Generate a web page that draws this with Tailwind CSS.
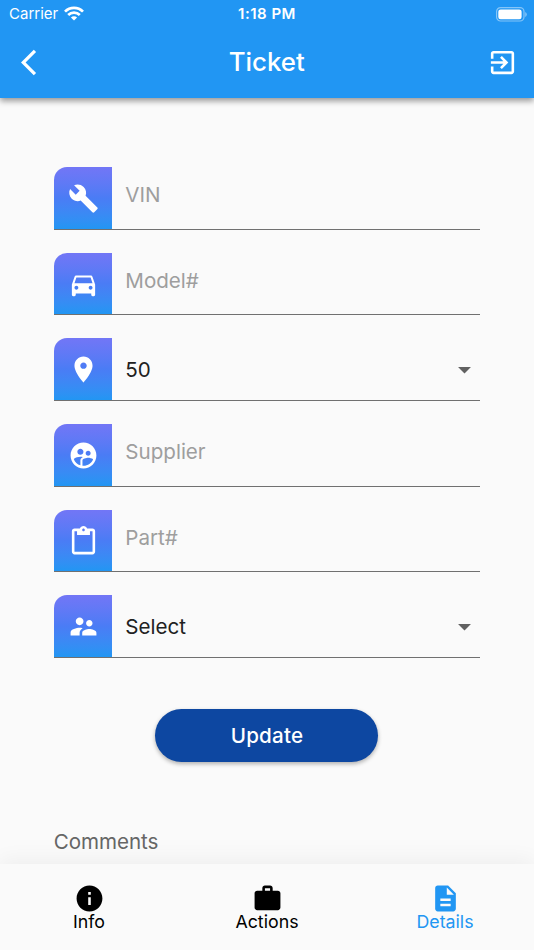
<!DOCTYPE html>
<html lang="en">
<head>
<meta charset="utf-8">
<title>Ticket</title>
<script src="https://cdn.jsdelivr.net/npm/@tailwindcss/browser@4"></script>
</head>
<body class="w-[534px] h-[950px] overflow-hidden bg-[#fafafa] font-['Inter',sans-serif] flex flex-col text-[20.6px] text-[#212121]">
  <header class="relative z-10 h-[98px] shrink-0 bg-[#2196f3] text-white shadow-[0_3px_6px_rgba(0,0,0,0.4)]">
    <div class="h-[27px] grid grid-cols-3 items-center px-[9px] text-[15px]">
      <div class="flex items-center gap-[6px]">
        <span class="leading-[28px]">Carrier</span>
        <svg class="w-[20px] h-[15px] -mt-[1px]" viewBox="0 0 20 15" fill="none" stroke="#fff" stroke-width="2.7"><path d="M1 5.6a12.7 12.7 0 0 1 18 0"/><path d="M4.2 9a8.2 8.2 0 0 1 11.6 0"/><path d="M10 14.6 6.9 11.5a4.4 4.4 0 0 1 6.2 0z" fill="#fff" stroke="none"/></svg>
      </div>
      <span class="text-center font-semibold leading-[28px] tracking-[0.5px]">1:18 PM</span>
      <svg class="w-[31px] h-[15px] justify-self-end -mr-[2px]" viewBox="0 0 31 15"><rect x="0.6" y="0.6" width="27.4" height="13.4" rx="4" fill="none" stroke="#fff" stroke-opacity=".45" stroke-width="1.2"/><rect x="2.3" y="2.4" width="23.3" height="9.8" rx="2.3" fill="#fff"/><path d="M29.3 5v5q1.4-.8 1.4-2.5T29.3 5z" fill="#fff" fill-opacity=".5"/></svg>
    </div>
    <div class="h-[71px] grid grid-cols-[1fr_auto_1fr] items-center pl-[20.5px] pr-[16px]">
      <svg class="size-[31px]" viewBox="0 0 24 24" fill="#fff"><path d="M11.67 3.87L9.9 2.1 0 12l9.9 9.9 1.77-1.77L3.54 12z"/></svg>
      <h1 class="text-[25.8px] font-medium -ml-[5px]">Ticket</h1>
      <svg class="size-[31px] justify-self-end" viewBox="0 0 24 24" fill="#fff"><path d="M10.09 15.59L11.5 17l5-5-5-5-1.41 1.41L12.67 11H3v2h9.67l-2.58 2.59zM19 3H5c-1.11 0-2 .9-2 2v4h2V5h14v14H5v-4H3v4c0 1.1.89 2 2 2h14c1.1 0 2-.9 2-2V5c0-1.1-.9-2-2-2z"/></svg>
    </div>
  </header>

  <main class="flex-1 px-[53.7px] pt-[69px]">
    <form class="flex flex-col gap-[23px]">
      <div class="h-[62.7px] flex border-b border-[#707070]">
        <span class="w-[58.6px] shrink-0 rounded-tl-[13px] bg-linear-to-b from-[#7276f6] via-[#4a7cf5] to-[#2196f3] flex items-center justify-center pt-[1px] pl-[1px]"><svg class="size-[31px]" viewBox="0 0 24 24" fill="#fff"><path d="M22.7 19l-9.1-9.1c.9-2.3.4-5-1.5-6.9-2-2-5-2.4-7.4-1.3L9 6 6 9 1.6 4.7C.4 7.1.9 10.1 2.9 12.1c1.9 1.9 4.6 2.4 6.9 1.5l9.1 9.1c.4.4 1 .4 1.4 0l2.3-2.3c.5-.4.5-1.1.1-1.4z"/></svg></span>
        <span class="pl-[13px] leading-[56px] text-[#9e9e9e]">VIN</span>
      </div>
      <div class="h-[62.7px] flex border-b border-[#707070]">
        <span class="w-[58.6px] shrink-0 rounded-tl-[13px] bg-linear-to-b from-[#7276f6] via-[#4a7cf5] to-[#2196f3] flex items-center justify-center pt-[1px] pl-[1px]"><svg class="size-[31px]" viewBox="0 0 24 24" fill="#fff"><path d="M18.92 6.01C18.72 5.42 18.16 5 17.5 5h-11c-.66 0-1.21.42-1.42 1.01L3 12v8c0 .55.45 1 1 1h1c.55 0 1-.45 1-1v-1h12v1c0 .55.45 1 1 1h1c.55 0 1-.45 1-1v-8l-2.08-5.99zM6.5 16c-.83 0-1.5-.67-1.5-1.5S5.67 13 6.5 13s1.5.67 1.5 1.5S7.33 16 6.5 16zm11 0c-.83 0-1.5-.67-1.5-1.5s.67-1.5 1.5-1.5 1.5.67 1.5 1.5-.67 1.5-1.5 1.5zM5 11l1.5-4.5h11L19 11H5z"/></svg></span>
        <span class="pl-[13px] leading-[56px] text-[#9e9e9e]">Model#</span>
      </div>
      <div class="h-[62.7px] flex border-b border-[#707070]">
        <span class="w-[58.6px] shrink-0 rounded-tl-[13px] bg-linear-to-b from-[#7276f6] via-[#4a7cf5] to-[#2196f3] flex items-center justify-center pl-[1px]"><svg class="size-[31px]" viewBox="0 0 24 24" fill="#fff"><path d="M12 2C8.13 2 5 5.13 5 9c0 5.25 7 13 7 13s7-7.75 7-13c0-3.87-3.13-7-7-7zm0 9.5c-1.38 0-2.5-1.12-2.5-2.5s1.12-2.5 2.5-2.5 2.5 1.12 2.5 2.5-1.12 2.5-2.5 2.5z"/></svg></span>
        <span class="pl-[13px] leading-[63px] flex-1">50</span>
        <svg class="size-[31px] self-center" viewBox="0 0 24 24" fill="#616161"><path d="M7 10l5 5 5-5z"/></svg>
      </div>
      <div class="h-[62.7px] flex border-b border-[#707070]">
        <span class="w-[58.6px] shrink-0 rounded-tl-[13px] bg-linear-to-b from-[#7276f6] via-[#4a7cf5] to-[#2196f3] flex items-center justify-center pt-[1px] pl-[1px]"><svg class="size-[31px]" viewBox="0 0 24 24" fill="#fff"><path d="M11.99 2c-5.52 0-10 4.48-10 10s4.48 10 10 10 10-4.48 10-10-4.48-10-10-10zm3.61 6.34c1.07 0 1.93.86 1.93 1.93 0 1.07-.86 1.93-1.93 1.93-1.07 0-1.93-.86-1.93-1.93-.01-1.07.86-1.93 1.93-1.93zm-6-1.58c1.3 0 2.36 1.06 2.36 2.36 0 1.3-1.06 2.36-2.36 2.36s-2.36-1.06-2.36-2.36c0-1.31 1.05-2.36 2.36-2.36zm0 9.13v3.75c-2.4-.75-4.3-2.6-5.14-4.96 1.05-1.12 3.67-1.69 5.14-1.69.53 0 1.2.08 1.9.22-1.64.87-1.9 2.02-1.9 2.68zM11.99 20c-.27 0-.53-.01-.79-.04v-4.07c0-1.42 2.94-2.13 4.4-2.13 1.07 0 2.92.39 3.84 1.15-1.17 2.97-4.06 5.09-7.45 5.09z"/></svg></span>
        <span class="pl-[13px] leading-[56px] text-[#9e9e9e]">Supplier</span>
      </div>
      <div class="h-[62.7px] flex border-b border-[#707070]">
        <span class="w-[58.6px] shrink-0 rounded-tl-[13px] bg-linear-to-b from-[#7276f6] via-[#4a7cf5] to-[#2196f3] flex items-center justify-center pt-[1px] pl-[1px]"><svg class="size-[31px]" viewBox="0 0 24 24" fill="#fff"><path d="M19 2h-4.18C14.4.84 13.3 0 12 0c-1.3 0-2.4.84-2.82 2H5c-1.1 0-2 .9-2 2v16c0 1.1.9 2 2 2h14c1.1 0 2-.9 2-2V4c0-1.1-.9-2-2-2zm-7 0c.55 0 1 .45 1 1s-.45 1-1 1-1-.45-1-1 .45-1 1-1zm7 18H5V4h2v3h10V4h2v16z"/></svg></span>
        <span class="pl-[13px] leading-[56px] text-[#9e9e9e]">Part#</span>
      </div>
      <div class="h-[62.7px] flex border-b border-[#707070]">
        <span class="w-[58.6px] shrink-0 rounded-tl-[13px] bg-linear-to-b from-[#7276f6] via-[#4a7cf5] to-[#2196f3] flex items-center justify-center pt-[1px] pl-[1px]"><svg class="size-[31px]" viewBox="0 0 24 24" fill="#fff"><path d="M16.5 12c1.38 0 2.49-1.12 2.49-2.5S17.88 7 16.5 7C15.12 7 14 8.12 14 9.5s1.12 2.5 2.5 2.5zM9 11c1.66 0 2.99-1.34 2.99-3S10.66 5 9 5C7.34 5 6 6.34 6 8s1.34 3 3 3zm7.5 3c-1.83 0-5.5.92-5.5 2.75V19h11v-2.25c0-1.83-3.67-2.75-5.5-2.75zM9 13c-2.33 0-7 1.17-7 3.5V19h7v-2.25c0-.85.33-2.34 2.37-3.47C10.5 13.1 9.66 13 9 13z"/></svg></span>
        <span class="pl-[13px] leading-[63px] flex-1">Select</span>
        <svg class="size-[31px] self-center" viewBox="0 0 24 24" fill="#616161"><path d="M7 10l5 5 5-5z"/></svg>
      </div>
    </form>
    <button class="mt-[51.3px] ml-[101.8px] block w-[223px] h-[53px] pt-[2px] rounded-full bg-[#0d47a1] text-white font-medium tracking-[0.2px] shadow-[0_2px_4px_rgba(0,0,0,0.3)]">Update</button>
    <p class="mt-[64px] leading-[31px] text-[#666666] tracking-[-0.05px]">Comments</p>
  </main>

  <nav class="relative h-[86px] shrink-0 bg-[#fafafa] shadow-[0_-4px_20px_rgba(0,0,0,0.05)] grid grid-cols-3 pt-[19px] text-[17.8px] leading-[20px] text-black">
    <div class="flex flex-col items-center"><svg class="size-[31px] -mb-[2.5px]" viewBox="0 0 24 24" fill="currentColor"><path d="M12 2C6.48 2 2 6.48 2 12s4.48 10 10 10 10-4.48 10-10S17.52 2 12 2zm1 15h-2v-6h2v6zm0-8h-2V7h2v2z"/></svg>Info</div>
    <div class="flex flex-col items-center"><svg class="size-[31px] -mb-[2.5px]" viewBox="0 0 24 24" fill="currentColor"><path d="M20 6h-4V4c0-1.11-.89-2-2-2h-4c-1.11 0-2 .89-2 2v2H4c-1.11 0-2 .89-2 2v11c0 1.11.89 2 2 2h16c1.11 0 2-.89 2-2V8c0-1.11-.89-2-2-2zm-6 0h-4V4h4v2z"/></svg>Actions</div>
    <div class="flex flex-col items-center text-[#2196f3]"><svg class="size-[31px] -mb-[2.5px]" viewBox="0 0 24 24" fill="currentColor"><path d="M14 2H6c-1.1 0-1.99.9-1.99 2L4 20c0 1.1.89 2 1.99 2H18c1.1 0 2-.9 2-2V8l-6-6zm2 16H8v-2h8v2zm0-4H8v-2h8v2zm-3-5V3.5L18.5 9H13z"/></svg>Details</div>
  </nav>
</body>
</html>
